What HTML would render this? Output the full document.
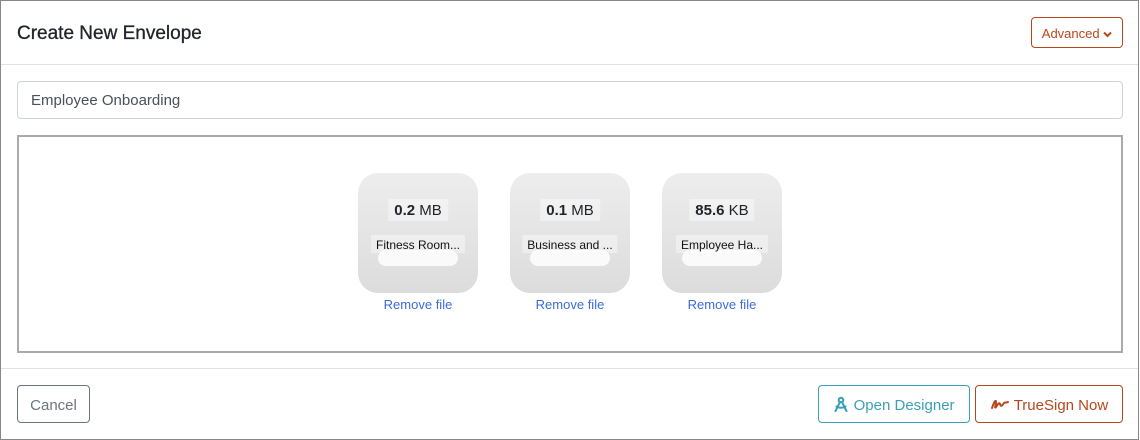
<!DOCTYPE html>
<html><head><style>
*{box-sizing:border-box;margin:0;padding:0}
body{width:1140px;height:440px;background:#fff;font-family:"Liberation Sans",sans-serif;color:#212529;position:relative;overflow:hidden}
.frame{position:absolute;left:0;top:0;width:1139px;height:440px;border:1px solid #888;}
h1{position:absolute;left:17px;top:23px;font-size:19px;font-weight:normal;color:#212529;-webkit-text-stroke:0.3px #212529}
.adv{position:absolute;left:1031px;top:17px;width:92px;height:31px;border:1px solid #b8461b;border-radius:4px;color:#b8461b;font-size:13px;line-height:31px;text-align:center}
.hr{position:absolute;left:1px;right:2px;height:1px;background:#dee2e6}
.inp{position:absolute;left:17px;top:81px;width:1106px;height:38px;border:1px solid #ced4da;border-radius:4px;font-size:15px;line-height:38px;padding-left:13px;color:#495057}
.dz{position:absolute;left:17px;top:135px;width:1106px;height:218px;border:2px solid #aaa}
.card{position:absolute;top:173px;width:120px;height:120px;border-radius:20px;background:linear-gradient(#ededed,#dcdcdc)}
.sz{position:absolute;top:26px;left:50%;transform:translateX(-50%);background:rgba(255,255,255,.4);padding:0 6px;height:22px;line-height:23px;font-size:15px;white-space:nowrap}
.nm{position:absolute;top:62px;left:50%;transform:translateX(-50%);background:rgba(255,255,255,.4);padding:0 5px;height:18px;line-height:20px;font-size:12px;white-space:nowrap;color:#111}
.bar{position:absolute;top:77px;left:20px;right:20px;height:16px;border-radius:8px;background:#fafafa}
.rm{position:absolute;top:297px;width:120px;text-align:center;font-size:13px;color:#3b6cd6}
.btn{position:absolute;top:385px;height:38px;border-radius:4px;font-size:15px;line-height:39px;text-align:center}
</style></head><body>
<div class="frame"></div>
<h1>Create New Envelope</h1>
<div class="adv">Advanced <svg width="9" height="7" viewBox="0 0 9 7" style="vertical-align:0"><path d="M1 1.5 L4.5 5 L8 1.5" fill="none" stroke="#b8461b" stroke-width="2"/></svg></div>
<div class="hr" style="top:64px"></div>
<div class="inp">Employee Onboarding</div>
<div class="dz"></div>
<div class="card" style="left:358px"><div class="sz"><b>0.2</b> MB</div><div class="bar"></div><div class="nm">Fitness Room...</div></div>
<div class="card" style="left:510px"><div class="sz"><b>0.1</b> MB</div><div class="bar"></div><div class="nm">Business and ...</div></div>
<div class="card" style="left:662px"><div class="sz"><b>85.6</b> KB</div><div class="bar"></div><div class="nm">Employee Ha...</div></div>
<div class="rm" style="left:358px">Remove file</div>
<div class="rm" style="left:510px">Remove file</div>
<div class="rm" style="left:662px">Remove file</div>
<div class="hr" style="top:368px"></div>
<div class="btn" style="left:17px;width:73px;border:1px solid #6c757d;color:#6c757d">Cancel</div>
<div class="btn" style="left:818px;width:152px;border:1px solid #3aa0b8;color:#3aa0b8">
<svg width="16" height="16" viewBox="0 0 16 16" style="vertical-align:-2px"><g fill="none" stroke="#3aa0b8" stroke-width="2" stroke-linecap="round"><circle cx="8" cy="4" r="2.3"/><path d="M7 6 L2.5 15 M9 6 L13.5 15 M3.5 10.5 Q8 13 12.5 10.5"/></g></svg> Open Designer</div>
<div class="btn" style="left:975px;width:148px;border:1px solid #b8461b;color:#b8461b">
<svg width="20" height="14" viewBox="0 0 20 14" style="vertical-align:-1px"><path d="M2 11 C4 5 6 2 6 5 C6 8 4 12 6 10 C8 7 9 5 10 7 C11 10 12 9 14 6 C15 5 16 6 18 5" fill="none" stroke="#b8461b" stroke-width="2" stroke-linecap="round"/></svg> TrueSign Now</div>
</body></html>
